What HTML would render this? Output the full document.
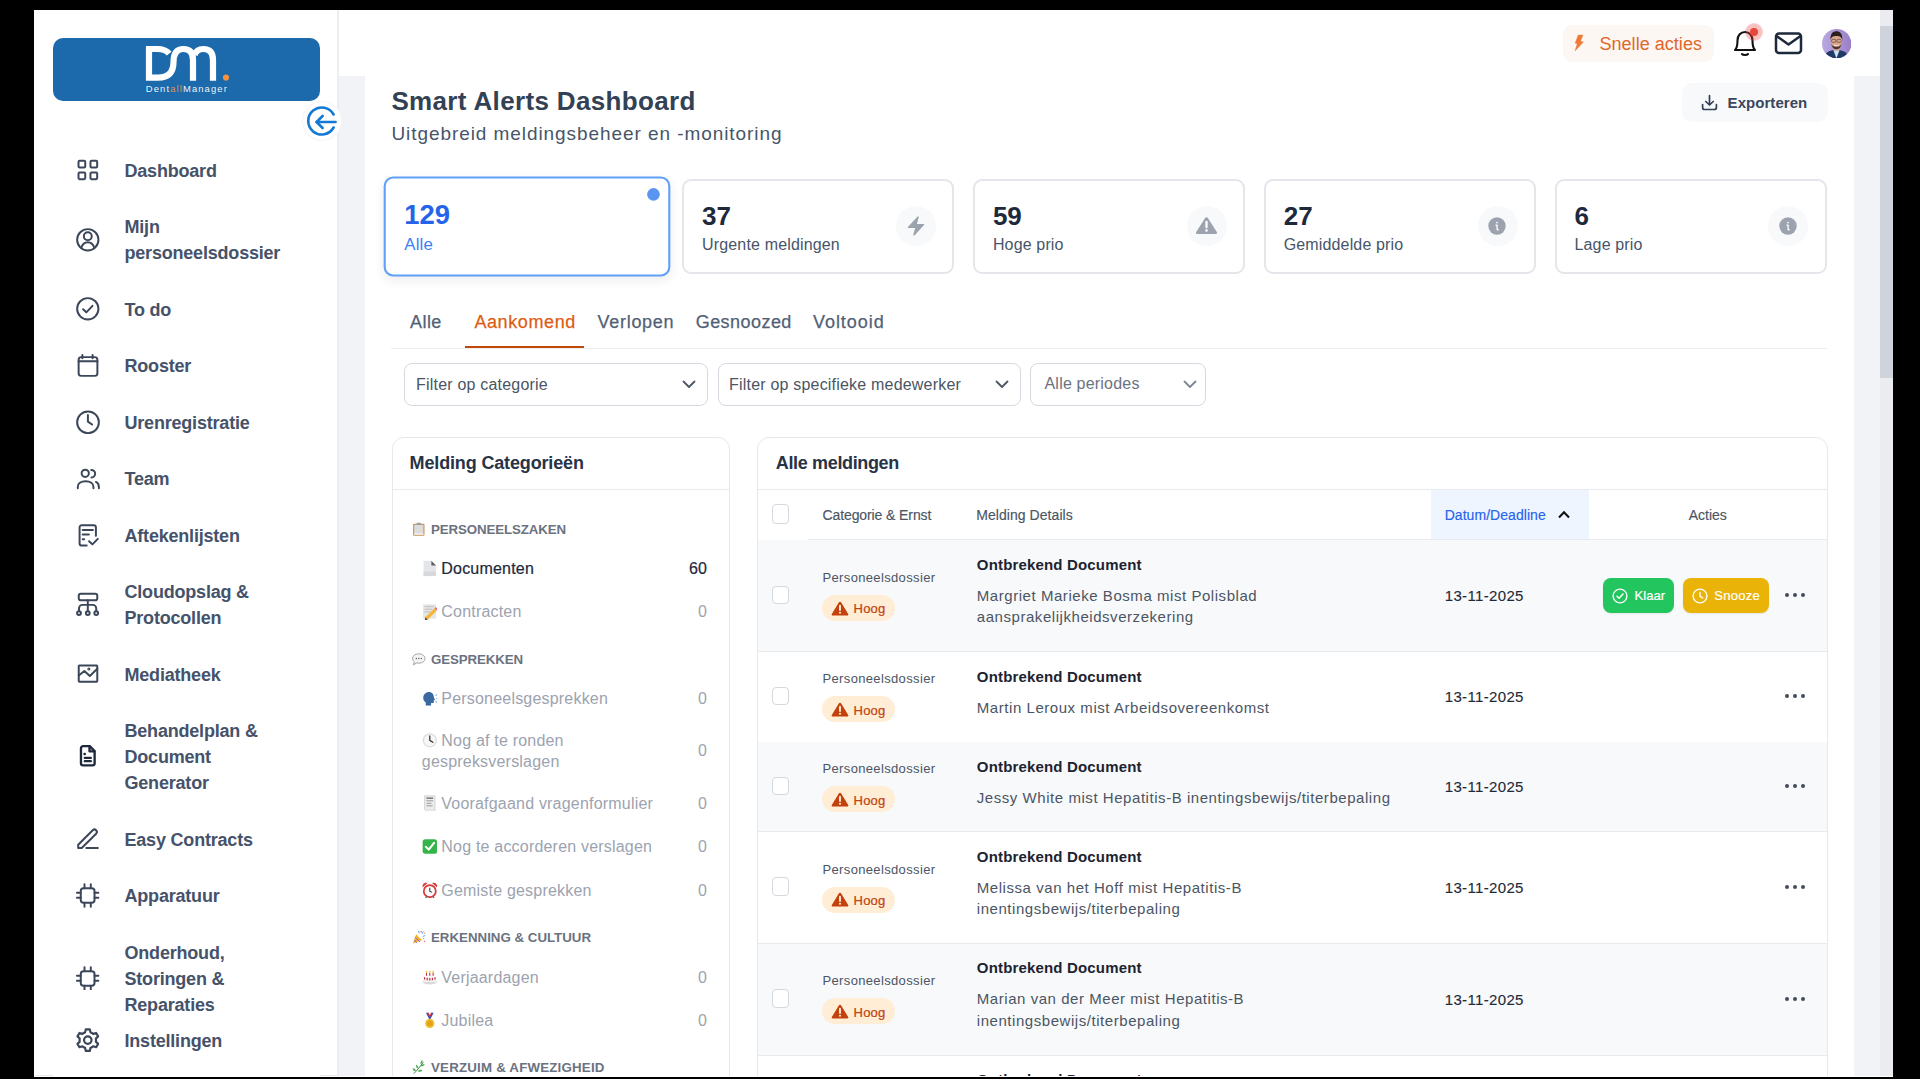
<!DOCTYPE html>
<html><head><meta charset="utf-8"><title>Smart Alerts Dashboard</title>
<style>
html,body{margin:0;padding:0;}
body{width:1920px;height:1079px;background:#000;position:relative;overflow:hidden;font-family:"Liberation Sans",sans-serif;}
.t{position:absolute;white-space:nowrap;}
.r{position:absolute;}
</style></head><body>

<div class="r" style="left:34px;top:10px;width:1859px;height:1067px;background:#fff;"></div>
<div class="r" style="left:338px;top:76px;width:1542px;height:1001px;background:#f2f3f7;"></div>
<div class="r" style="left:364.5px;top:76px;width:1489.5px;height:1001px;background:#fff;"></div>
<div class="r" style="left:1880px;top:10px;width:13px;height:1067px;background:#ebecf0;"></div>
<div class="r" style="left:1880px;top:25.5px;width:13px;height:352.5px;background:#cfd3db;"></div>
<div class="r" style="left:337px;top:10px;width:1.6px;height:1067px;background:#eceef2;"></div>
<div class="r" style="left:53px;top:38px;width:266.5px;height:62.5px;background:#1c6aab;border-radius:10px;"></div>
<svg class="r" style="left:53px;top:38px;" width="266" height="62.5" viewBox="53 38 266 62.5" fill="none">
<g stroke="#fff" stroke-width="6.2" fill="none" stroke-linejoin="miter">
<path d="M169.2,53.6 Q165.5,49 157,49 L149,49 L149,77.6 L158,77.6 Q173.5,77.6 173.5,62 Q173.5,49 183.5,49 Q193,49 193,60 L193,80.8"/>
<path d="M194.5,55 Q196.5,49 203.5,49 Q213,49 213,60 L213,80.8"/>
</g>
<circle cx="226" cy="77.5" r="3.1" fill="#f5913f"/>
<text x="145.8" y="92.2" font-family="Liberation Sans" font-size="9.4" fill="#fff" fill-opacity="0.95" textLength="81" lengthAdjust="spacing">Dent<tspan fill="#f5913f">all</tspan>Manager</text>
</svg>
<div class="r" style="left:303px;top:102px;width:38px;height:38px;background:#fff;border-radius:50%;box-shadow:0 0 0 1px #f4f5f7;"></div>
<svg class="r" style="left:306px;top:105.5px;" width="32" height="32" viewBox="0 0 32 32" fill="none">
<g stroke="#1479d4" stroke-width="2.6" stroke-linecap="round" stroke-linejoin="round" fill="none">
<path d="M27.6,8.5 A13.5,13.5 0 1 0 27.6,21.5"/>
<path d="M10.6,16 H29.6"/>
<path d="M16.6,10 L10.6,16 L16.6,22"/>
</g></svg>
<div class="t" style="left:124.5px;top:161.96px;font-size:18px;line-height:18px;color:#45526a;font-weight:700;letter-spacing:-0.2px;">Dashboard</div>
<svg class="r" style="left:74.7px;top:157.2px;" width="25.6" height="25.6" viewBox="0 0 24 24" fill="none"><g stroke="#3b4658" stroke-width="1.85" stroke-linecap="round" stroke-linejoin="round"><rect x="3.3" y="3.6" width="6.3" height="6.3" rx="1"/><rect x="14.5" y="3.6" width="6.3" height="6.3" rx="1"/><rect x="3.3" y="14.5" width="6.3" height="6.3" rx="1"/><rect x="14.5" y="14.5" width="6.3" height="6.3" rx="1"/></g></svg>
<div class="t" style="left:124.5px;top:218.26px;font-size:18px;line-height:18px;color:#45526a;font-weight:700;letter-spacing:-0.2px;">Mijn</div>
<div class="t" style="left:124.5px;top:244.26px;font-size:18px;line-height:18px;color:#45526a;font-weight:700;letter-spacing:-0.2px;">personeelsdossier</div>
<svg class="r" style="left:74.7px;top:226.5px;" width="25.6" height="25.6" viewBox="0 0 24 24" fill="none"><g stroke="#3b4658" stroke-width="1.85" stroke-linecap="round" stroke-linejoin="round"><circle cx="12" cy="12" r="10"/><circle cx="12" cy="8.6" r="3.7"/><path d="M5.9,19.4 C7,16 9.3,14.3 12,14.3 C14.7,14.3 17,16 18.1,19.4"/></g></svg>
<div class="t" style="left:124.5px;top:300.76px;font-size:18px;line-height:18px;color:#45526a;font-weight:700;letter-spacing:-0.2px;">To do</div>
<svg class="r" style="left:74.7px;top:296.0px;" width="25.6" height="25.6" viewBox="0 0 24 24" fill="none"><g stroke="#3b4658" stroke-width="1.85" stroke-linecap="round" stroke-linejoin="round"><circle cx="12" cy="12" r="10"/><path d="M7.6,12.4 L10.6,15.3 L16.4,9.2"/></g></svg>
<div class="t" style="left:124.5px;top:357.06px;font-size:18px;line-height:18px;color:#45526a;font-weight:700;letter-spacing:-0.2px;">Rooster</div>
<svg class="r" style="left:74.7px;top:352.3px;" width="25.6" height="25.6" viewBox="0 0 24 24" fill="none"><g stroke="#3b4658" stroke-width="1.85" stroke-linecap="round" stroke-linejoin="round"><rect x="3.4" y="4.8" width="17.6" height="17.6" rx="2.4"/><path d="M3.4,8.6 H21 M6.9,2.8 V5.8 M16.5,2.8 V5.8"/></g></svg>
<div class="t" style="left:124.5px;top:413.66px;font-size:18px;line-height:18px;color:#45526a;font-weight:700;letter-spacing:-0.2px;">Urenregistratie</div>
<svg class="r" style="left:74.7px;top:408.9px;" width="25.6" height="25.6" viewBox="0 0 24 24" fill="none"><g stroke="#3b4658" stroke-width="1.85" stroke-linecap="round" stroke-linejoin="round"><circle cx="12.2" cy="12.5" r="10.2"/><path d="M12.1,5.6 V11.8 L16,14.6"/></g></svg>
<div class="t" style="left:124.5px;top:470.06px;font-size:18px;line-height:18px;color:#45526a;font-weight:700;letter-spacing:-0.2px;">Team</div>
<svg class="r" style="left:74.7px;top:465.3px;" width="25.6" height="25.6" viewBox="0 0 24 24" fill="none"><g stroke="#3b4658" stroke-width="1.85" stroke-linecap="round" stroke-linejoin="round"><circle cx="9.6" cy="7.8" r="3.4"/><path d="M2.6,21.8 V20.6 C2.6,17.5 5.5,15.3 9.95,15.3 C14.4,15.3 17.3,17.5 17.3,20.6 V21.8"/><path d="M15.2,4.6 A3.6,3.6 0 0 1 15.4,11.8"/><path d="M19.6,15.9 C21.3,16.7 22.4,18.4 22.4,20.6 V21.8"/></g></svg>
<div class="t" style="left:124.5px;top:526.56px;font-size:18px;line-height:18px;color:#45526a;font-weight:700;letter-spacing:-0.2px;">Aftekenlijsten</div>
<svg class="r" style="left:74.7px;top:521.8000000000001px;" width="25.6" height="25.6" viewBox="0 0 24 24" fill="none"><g stroke="#3b4658" stroke-width="1.85" stroke-linecap="round" stroke-linejoin="round"><path d="M19.6,13 V5 A2,2 0 0 0 17.6,3 H6.3 A2,2 0 0 0 4.3,5 V20.1 A2,2 0 0 0 6.3,22.1 H11"/><path d="M7.2,7.4 H16.8 M7.2,11.8 H13 M7.2,16.1 H8.6"/><path d="M13.2,18 L16.3,21 L21.4,15.8"/></g></svg>
<div class="t" style="left:124.5px;top:582.86px;font-size:18px;line-height:18px;color:#45526a;font-weight:700;letter-spacing:-0.2px;">Cloudopslag &amp;</div>
<div class="t" style="left:124.5px;top:608.86px;font-size:18px;line-height:18px;color:#45526a;font-weight:700;letter-spacing:-0.2px;">Protocollen</div>
<svg class="r" style="left:74.7px;top:591.1px;" width="25.6" height="25.6" viewBox="0 0 24 24" fill="none"><g stroke="#3b4658" stroke-width="1.85" stroke-linecap="round" stroke-linejoin="round"><rect x="3.5" y="2.6" width="17.4" height="6.1" rx="2"/><path d="M12,8.7 V18.9 M12,13 H7 A3.25,3.25 0 0 0 3.75,16.25 V18.9 M12,13 H16.65 A3.25,3.25 0 0 1 19.9,16.25 V18.9"/><circle cx="3.75" cy="20.7" r="1.8"/><circle cx="12" cy="20.7" r="1.8"/><circle cx="19.9" cy="20.7" r="1.8"/></g></svg>
<div class="t" style="left:124.5px;top:665.66px;font-size:18px;line-height:18px;color:#45526a;font-weight:700;letter-spacing:-0.2px;">Mediatheek</div>
<svg class="r" style="left:74.7px;top:660.9000000000001px;" width="25.6" height="25.6" viewBox="0 0 24 24" fill="none"><g stroke="#3b4658" stroke-width="1.85" stroke-linecap="round" stroke-linejoin="round"><rect x="3.5" y="4.3" width="17.4" height="15.1" rx="0.6"/><path d="M3.5,13.6 L8.8,9.3 L13.9,14 L20.9,7.2"/><circle cx="13" cy="7.6" r="0.5"/></g></svg>
<div class="t" style="left:124.5px;top:721.96px;font-size:18px;line-height:18px;color:#45526a;font-weight:700;letter-spacing:-0.2px;">Behandelplan &amp;</div>
<div class="t" style="left:124.5px;top:747.96px;font-size:18px;line-height:18px;color:#45526a;font-weight:700;letter-spacing:-0.2px;">Document</div>
<div class="t" style="left:124.5px;top:773.96px;font-size:18px;line-height:18px;color:#45526a;font-weight:700;letter-spacing:-0.2px;">Generator</div>
<svg class="r" style="left:74.7px;top:743.2px;" width="25.6" height="25.6" viewBox="0 0 24 24" fill="none"><g stroke="#1e293b" stroke-width="2.2" stroke-linecap="round" stroke-linejoin="round"><path d="M13.8,3 H7.6 A2,2 0 0 0 5.6,5 V19 A2,2 0 0 0 7.6,21 H16.4 A2,2 0 0 0 18.4,19 V7.6 Z"/><path d="M13.6,3.2 V7.8 H18.2"/><path d="M9.2,13.9 H14.8 M9.2,17 H14.8"/><path d="M8.9,10.3 h0.3"/></g></svg>
<div class="t" style="left:124.5px;top:830.76px;font-size:18px;line-height:18px;color:#45526a;font-weight:700;letter-spacing:-0.2px;">Easy Contracts</div>
<svg class="r" style="left:74.7px;top:826.0px;" width="25.6" height="25.6" viewBox="0 0 24 24" fill="none"><g stroke="#3b4658" stroke-width="1.85" stroke-linecap="round" stroke-linejoin="round"><path d="M3,20.6 V17.6 L16.6,4 A2.2,2.2 0 0 1 19.8,7.2 L6.3,20.6 Z"/><path d="M10.6,20.6 H21.4"/></g></svg>
<div class="t" style="left:124.5px;top:887.16px;font-size:18px;line-height:18px;color:#45526a;font-weight:700;letter-spacing:-0.2px;">Apparatuur</div>
<svg class="r" style="left:74.7px;top:882.4000000000001px;" width="25.6" height="25.6" viewBox="0 0 24 24" fill="none"><g stroke="#3b4658" stroke-width="1.85" stroke-linecap="round" stroke-linejoin="round"><rect x="5.4" y="5.8" width="12.9" height="13.6" rx="2.6"/><path d="M8.9,2 V5.8 M14.8,2 V5.8 M8.9,19.4 V23.2 M14.8,19.4 V23.2 M1.8,10 H5.4 M1.8,14.7 H5.4 M18.3,10 H21.9 M18.3,14.7 H21.9"/></g></svg>
<div class="t" style="left:124.5px;top:943.56px;font-size:18px;line-height:18px;color:#45526a;font-weight:700;letter-spacing:-0.2px;">Onderhoud,</div>
<div class="t" style="left:124.5px;top:969.56px;font-size:18px;line-height:18px;color:#45526a;font-weight:700;letter-spacing:-0.2px;">Storingen &amp;</div>
<div class="t" style="left:124.5px;top:995.56px;font-size:18px;line-height:18px;color:#45526a;font-weight:700;letter-spacing:-0.2px;">Reparaties</div>
<svg class="r" style="left:74.7px;top:964.8000000000001px;" width="25.6" height="25.6" viewBox="0 0 24 24" fill="none"><g stroke="#3b4658" stroke-width="1.85" stroke-linecap="round" stroke-linejoin="round"><rect x="5.4" y="5.8" width="12.9" height="13.6" rx="2.6"/><path d="M8.9,2 V5.8 M14.8,2 V5.8 M8.9,19.4 V23.2 M14.8,19.4 V23.2 M1.8,10 H5.4 M1.8,14.7 H5.4 M18.3,10 H21.9 M18.3,14.7 H21.9"/></g></svg>
<div class="t" style="left:124.5px;top:1031.86px;font-size:18px;line-height:18px;color:#45526a;font-weight:700;letter-spacing:-0.2px;">Instellingen</div>
<svg class="r" style="left:74.7px;top:1027.1000000000001px;" width="25.6" height="25.6" viewBox="0 0 24 24" fill="none"><g stroke="#3b4658" stroke-width="1.85" stroke-linecap="round" stroke-linejoin="round"><g transform="translate(12 12.3) scale(1.1) translate(-12 -12)"><path d="M10.3,2.8 H13.7 L14.3,5.4 A7.2,7.2 0 0 1 16.6,6.7 L19.1,5.9 L20.8,8.8 L18.9,10.7 A7.2,7.2 0 0 1 18.9,13.3 L20.8,15.2 L19.1,18.1 L16.6,17.3 A7.2,7.2 0 0 1 14.3,18.6 L13.7,21.2 H10.3 L9.7,18.6 A7.2,7.2 0 0 1 7.4,17.3 L4.9,18.1 L3.2,15.2 L5.1,13.3 A7.2,7.2 0 0 1 5.1,10.7 L3.2,8.8 L4.9,5.9 L7.4,6.7 A7.2,7.2 0 0 1 9.7,5.4 Z"/><circle cx="12" cy="12" r="3.2"/></g></g></svg>
<div class="r" style="left:1563px;top:25px;width:151px;height:37px;background:#fdf7f3;border-radius:9px;"></div>
<svg class="r" style="left:1570px;top:30px;" width="18" height="25" viewBox="1570 30 18 25" fill="none"><path d="M1578.2,35.1 L1582.9,35.1 L1580.6,41.3 L1583.4,41.9 L1575.1,50.9 L1577.2,43.6 L1575.1,43.2 Z" fill="#ee7a35" stroke="#ee7a35" stroke-width="0.4" stroke-linejoin="round"/></svg>
<div class="t" style="left:1599.5px;top:34.76px;font-size:18px;line-height:18px;color:#e0672a;font-weight:400;letter-spacing:0.03px;">Snelle acties</div>
<svg class="r" style="left:1731px;top:28px;" width="28" height="30" viewBox="0 0 28 30" fill="none"><g stroke="#111" stroke-width="2.1" fill="none" stroke-linecap="round" stroke-linejoin="round">
<path d="M4,22 C6,20 6.5,18 6.5,12.5 C6.5,7.2 9.8,4 14,4 C18.2,4 21.5,7.2 21.5,12.5 C21.5,18 22,20 24,22 Z"/>
<path d="M11,26 C12,27.3 16,27.3 17,26"/></g></svg>
<div class="r" style="left:1745px;top:22.7px;width:18px;height:18px;background:radial-gradient(circle, rgba(239,68,68,0.38) 0%, rgba(239,68,68,0.32) 60%, rgba(239,68,68,0) 100%);border-radius:50%;"></div>
<div class="r" style="left:1750px;top:27.7px;width:8px;height:8px;background:#e8473a;border-radius:50%;"></div>
<svg class="r" style="left:1773px;top:30px;" width="31" height="26" viewBox="0 0 31 26" fill="none"><g stroke="#1e293b" stroke-width="2.5" fill="none" stroke-linejoin="round" stroke-linecap="round">
<rect x="3" y="3.5" width="25" height="19.5" rx="3"/><path d="M3.5,6 L15.5,14.5 L27.5,6"/></g></svg>
<svg class="r" style="left:1821.5px;top:28.8px;" width="29.4" height="29.4" viewBox="0 0 30 30" fill="none"><defs><clipPath id="av"><circle cx="15" cy="15" r="15"/></clipPath>
<linearGradient id="avbg" x1="0" y1="0" x2="1" y2="0"><stop offset="0" stop-color="#b9a8e0"/><stop offset="1" stop-color="#9a80c8"/></linearGradient></defs>
<g clip-path="url(#av)"><rect width="30" height="30" fill="url(#avbg)"/>
<path d="M2,31 C3,24 7,21.5 14.6,21.5 C22,21.5 26.5,24 27.5,31 Z" fill="#1f3a66"/>
<path d="M11.5,21.2 L14.7,30 L18,21.2 Z" fill="#cfe0f2"/>
<rect x="12.4" y="17" width="4.6" height="5" fill="#c99178"/>
<ellipse cx="14.7" cy="12" rx="5.9" ry="8" fill="#d9a68c"/>
<path d="M8.7,11.5 C8.2,4.5 11.2,2.2 14.7,2.2 C18.2,2.2 21.2,4.5 20.7,11.5 C20.2,8.6 18.6,7.2 14.7,7.2 C10.8,7.2 9.2,8.6 8.7,11.5 Z" fill="#2b201c"/>
<path d="M9.5,14.5 C10,19.5 12.5,20.5 14.7,20.5 C16.9,20.5 19.4,19.5 19.9,14.5 C19,17.8 17,18 14.7,18 C12.4,18 10.4,17.8 9.5,14.5 Z" fill="#4a342a"/>
<rect x="9.8" y="10.6" width="4.3" height="3" rx="0.9" fill="none" stroke="#5a473d" stroke-width="0.7"/>
<rect x="15.3" y="10.6" width="4.3" height="3" rx="0.9" fill="none" stroke="#5a473d" stroke-width="0.7"/>
<path d="M12.3,16.2 C13.5,17.2 15.9,17.2 17.1,16.2" stroke="#fff" stroke-width="0.8" fill="none"/>
</g></svg>
<div class="t" style="left:391.4px;top:87.59px;font-size:26px;line-height:26px;color:#334155;font-weight:700;letter-spacing:0.35px;">Smart Alerts Dashboard</div>
<div class="t" style="left:391.4px;top:123.62px;font-size:19px;line-height:19px;color:#475569;font-weight:400;letter-spacing:0.93px;">Uitgebreid meldingsbeheer en -monitoring</div>
<div class="r" style="left:1681.5px;top:83px;width:146.5px;height:39px;background:#f8f9fb;border-radius:10px;"></div>
<svg class="r" style="left:1700px;top:93px;" width="19" height="19" viewBox="0 0 19 19" fill="none"><g stroke="#334155" stroke-width="1.7" fill="none" stroke-linecap="round" stroke-linejoin="round">
<path d="M9.5,2.5 V12 M5.8,8.5 L9.5,12 L13.2,8.5"/><path d="M2.6,11.5 V14.5 A2,2 0 0 0 4.6,16.5 H14.4 A2,2 0 0 0 16.4,14.5 V11.5"/></g></svg>
<div class="t" style="left:1727.6px;top:95.00px;font-size:15px;line-height:15px;color:#3a475c;font-weight:700;letter-spacing:0.05px;">Exporteren</div>
<div class="r" style="left:391.3px;top:179px;width:272px;height:94.6px;box-sizing:border-box;border:2px solid #60a0f8;border-radius:9px;background:#fff;transform:scale(1.054);box-shadow:0 4px 10px rgba(0,0,0,0.07);"><div class="r" style="left:247.5px;top:8.5px;width:12px;height:12px;border-radius:50%;background:#5b95f2;"></div><div class="t" style="left:17.6px;top:21.39px;font-size:26px;line-height:26px;font-weight:700;color:#2563eb;">129</div><div class="t" style="left:17.6px;top:55.36px;font-size:16px;line-height:16px;color:#3b82f6;letter-spacing:0.15px;">Alle</div></div>
<div class="r" style="left:682.1px;top:179.3px;width:272.3px;height:94.3px;box-sizing:border-box;border:2px solid #e4e6eb;border-radius:9px;background:#fff;"></div>
<div class="t" style="left:702.1px;top:202.59px;font-size:26px;line-height:26px;color:#1e293b;font-weight:700;">37</div>
<div class="t" style="left:702.1px;top:236.66px;font-size:16px;line-height:16px;color:#475569;font-weight:400;letter-spacing:0.15px;">Urgente meldingen</div>
<div class="r" style="left:895.9000000000001px;top:206.3px;width:40px;height:40px;background:#f8f9fb;border-radius:50%;"></div>
<svg class="r" style="left:904.5000000000001px;top:215.10000000000002px;" width="22" height="22" viewBox="0 0 24 24" fill="none"><path d="M14.615,1.595a.75.75 0 0 1 .359.852L12.982,9.75h7.268a.75.75 0 0 1 .548,1.262l-10.5,11.25a.75.75 0 0 1-1.272-.71l1.992-7.302H3.75a.75.75 0 0 1-.548-1.262l10.5-11.25a.75.75 0 0 1 .913-.143z" fill="#9ca3af"/></svg>
<div class="r" style="left:972.9000000000001px;top:179.3px;width:272.3px;height:94.3px;box-sizing:border-box;border:2px solid #e4e6eb;border-radius:9px;background:#fff;"></div>
<div class="t" style="left:992.9000000000001px;top:202.59px;font-size:26px;line-height:26px;color:#1e293b;font-weight:700;">59</div>
<div class="t" style="left:992.9000000000001px;top:236.66px;font-size:16px;line-height:16px;color:#475569;font-weight:400;letter-spacing:0.15px;">Hoge prio</div>
<div class="r" style="left:1186.7px;top:206.3px;width:40px;height:40px;background:#f8f9fb;border-radius:50%;"></div>
<svg class="r" style="left:1195.2px;top:216.3px;" width="23" height="19" viewBox="0 0 23 19" fill="none"><path d="M11.5,1.2 C12.2,1.2 12.6,1.6 13,2.2 L21.8,16 C22.4,17 21.8,18 20.7,18 H2.3 C1.2,18 0.6,17 1.2,16 L10,2.2 C10.4,1.6 10.8,1.2 11.5,1.2 Z" fill="#9ca3af"/><path d="M11.5,5.8 V11.3" stroke="#fff" stroke-width="2.3" stroke-linecap="round"/><circle cx="11.5" cy="14.6" r="1.25" fill="#fff"/></svg>
<div class="r" style="left:1263.7px;top:179.3px;width:272.3px;height:94.3px;box-sizing:border-box;border:2px solid #e4e6eb;border-radius:9px;background:#fff;"></div>
<div class="t" style="left:1283.7px;top:202.59px;font-size:26px;line-height:26px;color:#1e293b;font-weight:700;">27</div>
<div class="t" style="left:1283.7px;top:236.66px;font-size:16px;line-height:16px;color:#475569;font-weight:400;letter-spacing:0.15px;">Gemiddelde prio</div>
<div class="r" style="left:1477.5px;top:206.3px;width:40px;height:40px;background:#f8f9fb;border-radius:50%;"></div>
<svg class="r" style="left:1488.2px;top:217.20000000000002px;" width="18" height="18" viewBox="0 0 18 18" fill="none"><circle cx="9" cy="9" r="8.7" fill="#9ca3af"/><path d="M8,8.2 H9.1 V12.2 C9.1,12.9 9.6,13 10.2,12.7" stroke="#fff" stroke-width="1.3" fill="none" stroke-linecap="round" stroke-linejoin="round"/><circle cx="9" cy="5.6" r="0.85" fill="#fff"/></svg>
<div class="r" style="left:1554.5px;top:179.3px;width:272.3px;height:94.3px;box-sizing:border-box;border:2px solid #e4e6eb;border-radius:9px;background:#fff;"></div>
<div class="t" style="left:1574.5px;top:202.59px;font-size:26px;line-height:26px;color:#1e293b;font-weight:700;">6</div>
<div class="t" style="left:1574.5px;top:236.66px;font-size:16px;line-height:16px;color:#475569;font-weight:400;letter-spacing:0.15px;">Lage prio</div>
<div class="r" style="left:1768.3px;top:206.3px;width:40px;height:40px;background:#f8f9fb;border-radius:50%;"></div>
<svg class="r" style="left:1779.0px;top:217.20000000000002px;" width="18" height="18" viewBox="0 0 18 18" fill="none"><circle cx="9" cy="9" r="8.7" fill="#9ca3af"/><path d="M8,8.2 H9.1 V12.2 C9.1,12.9 9.6,13 10.2,12.7" stroke="#fff" stroke-width="1.3" fill="none" stroke-linecap="round" stroke-linejoin="round"/><circle cx="9" cy="5.6" r="0.85" fill="#fff"/></svg>
<div class="t" style="left:410px;top:313.16px;font-size:18px;line-height:18px;color:#526075;font-weight:400;letter-spacing:0.45px;-webkit-text-stroke:0.25px #526075;">Alle</div>
<div class="t" style="left:474.4px;top:313.16px;font-size:18px;line-height:18px;color:#de5d14;font-weight:400;letter-spacing:0.6px;-webkit-text-stroke:0.25px #de5d14;">Aankomend</div>
<div class="t" style="left:597.6px;top:313.16px;font-size:18px;line-height:18px;color:#526075;font-weight:400;letter-spacing:0.7px;-webkit-text-stroke:0.25px #526075;">Verlopen</div>
<div class="t" style="left:695.7px;top:313.16px;font-size:18px;line-height:18px;color:#526075;font-weight:400;letter-spacing:0.45px;-webkit-text-stroke:0.25px #526075;">Gesnoozed</div>
<div class="t" style="left:813px;top:313.16px;font-size:18px;line-height:18px;color:#526075;font-weight:400;letter-spacing:0.95px;-webkit-text-stroke:0.25px #526075;">Voltooid</div>
<div class="r" style="left:391px;top:348px;width:1436px;height:1px;background:#eceef2;"></div>
<div class="r" style="left:465px;top:346px;width:119px;height:2.2px;background:#bf4a0c;"></div>
<div class="r" style="left:404px;top:362.5px;width:303.5px;height:43px;box-sizing:border-box;border:1px solid #d5d9e0;border-radius:8px;background:#fff;"></div>
<div class="t" style="left:416px;top:377.06px;font-size:16px;line-height:16px;color:#4b5563;font-weight:400;letter-spacing:0.2px;">Filter op categorie</div>
<svg class="r" style="left:681.5px;top:378.5px;" width="14" height="10" viewBox="0 0 14 10" fill="none"><path d="M1.5,2.5 L7,8 L12.5,2.5" stroke="#4b5563" stroke-width="1.8" fill="none" stroke-linecap="round" stroke-linejoin="round"/></svg>
<div class="r" style="left:717.5px;top:362.5px;width:303px;height:43px;box-sizing:border-box;border:1px solid #d5d9e0;border-radius:8px;background:#fff;"></div>
<div class="t" style="left:729px;top:377.06px;font-size:16px;line-height:16px;color:#4b5563;font-weight:400;letter-spacing:0.2px;">Filter op specifieke medewerker</div>
<svg class="r" style="left:994.5px;top:378.5px;" width="14" height="10" viewBox="0 0 14 10" fill="none"><path d="M1.5,2.5 L7,8 L12.5,2.5" stroke="#4b5563" stroke-width="1.8" fill="none" stroke-linecap="round" stroke-linejoin="round"/></svg>
<div class="r" style="left:1030.3px;top:362.5px;width:175.5px;height:43px;box-sizing:border-box;border:1px solid #d5d9e0;border-radius:8px;background:#fff;"></div>
<div class="t" style="left:1044.5px;top:376.06px;font-size:16px;line-height:16px;color:#6b7280;font-weight:400;letter-spacing:0.2px;">Alle periodes</div>
<svg class="r" style="left:1183.1px;top:378.5px;" width="14" height="10" viewBox="0 0 14 10" fill="none"><path d="M1.5,2.5 L7,8 L12.5,2.5" stroke="#7d8696" stroke-width="1.8" fill="none" stroke-linecap="round" stroke-linejoin="round"/></svg>
<div class="r" style="left:391.5px;top:436.5px;width:338px;height:700px;box-sizing:border-box;border:1px solid #e6e8ec;border-radius:12px;background:#fff;"></div>
<div class="t" style="left:409.6px;top:454.06px;font-size:18px;line-height:18px;color:#283347;font-weight:700;letter-spacing:-0.15px;">Melding Categorie&euml;n</div>
<div class="r" style="left:392.5px;top:489px;width:336px;height:1px;background:#e8eaee;"></div>
<svg class="r" style="left:412.3px;top:521.6999999999999px;" width="13.6" height="14.506666666666666" viewBox="0 0 15 16" fill="none"><rect x="1.2" y="1.8" width="12.6" height="13.4" rx="1.2" fill="#c8924f"/><rect x="2.4" y="3.2" width="10.2" height="10.8" fill="#dcdcdc"/><rect x="2.4" y="12.6" width="10.2" height="1.4" fill="#f4f4f4"/><rect x="5" y="0.8" width="5" height="2.6" rx="0.8" fill="#9aa0a8"/></svg>
<div class="t" style="left:431px;top:522.54px;font-size:13.3px;line-height:13.3px;color:#6b7280;font-weight:700;letter-spacing:-0.12px;">PERSONEELSZAKEN</div>
<svg class="r" style="left:412.3px;top:652.0px;" width="13.6" height="14.506666666666666" viewBox="0 0 15 16" fill="none"><path d="M7.5,2 C11.8,2 14.3,4.4 14.3,7.2 C14.3,10 11.8,12.3 7.5,12.3 C6.7,12.3 5.9,12.2 5.2,12 L1.6,14.2 L2.6,10.8 C1.4,9.9 0.7,8.6 0.7,7.2 C0.7,4.4 3.2,2 7.5,2 Z" fill="#f4f4f4" stroke="#8f8f8f" stroke-width="0.9"/><circle cx="4.8" cy="7.2" r="0.75" fill="#555"/><circle cx="7.5" cy="7.2" r="0.75" fill="#555"/><circle cx="10.2" cy="7.2" r="0.75" fill="#555"/></svg>
<div class="t" style="left:431px;top:652.84px;font-size:13.3px;line-height:13.3px;color:#6b7280;font-weight:700;letter-spacing:-0.12px;">GESPREKKEN</div>
<svg class="r" style="left:412.3px;top:929.9px;" width="13.6" height="14.506666666666666" viewBox="0 0 15 16" fill="none"><path d="M1,15 L4.6,4.8 L11.2,11.4 Z" fill="#f3b52f"/><path d="M2.3,11.4 L5.6,14.1 M3.4,8.2 L8.6,13" stroke="#9b59b6" stroke-width="1.1"/><path d="M7,1 L8.2,3.6 M12.5,1.5 L11.3,4.2 M14.5,6 L11.8,7.2 M13.5,10 L12,9" stroke="#3a8ee6" stroke-width="0.9"/><circle cx="10" cy="2" r="0.8" fill="#e2457a"/><circle cx="14" cy="3.5" r="0.7" fill="#f08a2a"/><circle cx="13.8" cy="12.5" r="0.7" fill="#e2457a"/></svg>
<div class="t" style="left:431px;top:930.74px;font-size:13.3px;line-height:13.3px;color:#6b7280;font-weight:700;">ERKENNING &amp; CULTUUR</div>
<svg class="r" style="left:412.3px;top:1059.9px;" width="13.6" height="14.506666666666666" viewBox="0 0 15 16" fill="none"><path d="M2,15 C5,12 8,8.5 12.5,2.5" stroke="#2f7d32" stroke-width="1" fill="none"/><path d="M4.2,12.6 C2,12.6 0.6,11 0.8,9.2 C2.8,9.2 4.4,10.6 4.2,12.6 Z M6.8,9.6 C4.8,9 4,7 4.5,5.3 C6.4,6 7.3,7.8 6.8,9.6 Z M6.2,12.4 C7.6,10.6 10,10.4 11.5,11.2 C10.4,13 8,13.4 6.2,12.4 Z M9.2,6.6 C10.2,4.8 12.5,4.3 14,5 C13.2,6.8 11,7.4 9.2,6.6 Z M9.6,4.8 C9,3 9.8,1 11.4,0.4 C12.2,2.2 11.4,4 9.6,4.8 Z" fill="#4caf50"/></svg>
<div class="t" style="left:431px;top:1060.74px;font-size:13.3px;line-height:13.3px;color:#6b7280;font-weight:700;letter-spacing:0.2px;">VERZUIM &amp; AFWEZIGHEID</div>
<svg class="r" style="left:421.6px;top:560.0px;" width="15.6" height="16.64" viewBox="0 0 15 16" fill="none"><path d="M1.5,0.8 H9 L13.5,5.3 V15.5 H1.5 Z" fill="#e4e5e8"/><path d="M9,0.8 L13.5,5.3 H9 Z" fill="#5a5d63"/><path d="M1.5,11 H13.5 V15.5 H1.5 Z" fill="#d7d8dc"/></svg>
<div class="t" style="left:441.3px;top:561.06px;font-size:16px;line-height:16px;color:#1e293b;font-weight:400;letter-spacing:0.2px;-webkit-text-stroke:0.2px #1e293b;">Documenten</div>
<div class="t" style="left:646.8px;width:60px;text-align:right;top:561.06px;font-size:16px;line-height:16px;color:#1e293b;font-weight:400;-webkit-text-stroke:0.2px #1e293b;">60</div>
<svg class="r" style="left:421.6px;top:603.3px;" width="15.6" height="16.64" viewBox="0 0 15 16" fill="none"><rect x="1" y="1.2" width="12.5" height="14" fill="#e6e6e6"/><path d="M2.5,3.5 H11.5 M2.5,6 H10 M2.5,8.5 H8" stroke="#b0b0b0" stroke-width="0.7"/><path d="M3.2,13.8 L12,5 L14.2,7.2 L5.4,16 L2.8,16.3 Z" fill="#f4b63a"/><path d="M12,5 L13.2,3.8 L15.4,6 L14.2,7.2 Z" fill="#e46f86"/><path d="M2.8,16.3 L3.2,13.8 L5.4,16 Z" fill="#444"/></svg>
<div class="t" style="left:441.3px;top:604.36px;font-size:16px;line-height:16px;color:#9ca3af;font-weight:400;letter-spacing:0.2px;">Contracten</div>
<div class="t" style="left:646.8px;width:60px;text-align:right;top:604.36px;font-size:16px;line-height:16px;color:#9ca3af;font-weight:400;">0</div>
<svg class="r" style="left:421.6px;top:690.0px;" width="15.6" height="16.64" viewBox="0 0 15 16" fill="none"><path d="M1.2,8 C1.2,4.2 3.8,2 6.8,2 C9.7,2 11.4,4.2 11.4,7 L12.6,9.8 H11.3 V12.5 H8.7 V15 H3.6 V12 C2.2,11 1.2,9.7 1.2,8 Z" fill="#3a68a0"/><path d="M13,5.5 L14.6,4.3 M13.3,8.2 H15.2 M13,10.8 L14.6,12" stroke="#89b2e0" stroke-width="1"/></svg>
<div class="t" style="left:441.3px;top:691.06px;font-size:16px;line-height:16px;color:#9ca3af;font-weight:400;letter-spacing:0.2px;">Personeelsgesprekken</div>
<div class="t" style="left:646.8px;width:60px;text-align:right;top:691.06px;font-size:16px;line-height:16px;color:#9ca3af;font-weight:400;">0</div>
<svg class="r" style="left:421.6px;top:731.8px;" width="15.6" height="16.64" viewBox="0 0 15 16" fill="none"><circle cx="7.5" cy="8" r="6.8" fill="#dcdde0"/><circle cx="7.5" cy="8" r="5.6" fill="#f7f7f7"/><path d="M7.5,3.8 V8 L10.4,9.9" stroke="#333" stroke-width="1.2" fill="none" stroke-linecap="round"/></svg>
<div class="t" style="left:441.3px;top:732.86px;font-size:16px;line-height:16px;color:#9ca3af;font-weight:400;letter-spacing:0.2px;">Nog af te ronden</div>
<div class="t" style="left:421.8px;top:753.56px;font-size:16px;line-height:16px;color:#9ca3af;font-weight:400;letter-spacing:0.2px;">gespreksverslagen</div>
<div class="t" style="left:646.8px;width:60px;text-align:right;top:742.86px;font-size:16px;line-height:16px;color:#9ca3af;font-weight:400;">0</div>
<svg class="r" style="left:421.6px;top:794.9px;" width="15.6" height="16.64" viewBox="0 0 15 16" fill="none"><path d="M2.5,0.8 H12.5 V15.2 L11,14.2 L9.5,15.2 L8,14.2 L6.5,15.2 L5,14.2 L3.5,15.2 L2.5,14.2 Z" fill="#ececec" stroke="#c4c4c4" stroke-width="0.6"/><path d="M4.3,3 H10.7" stroke="#555" stroke-width="1.1"/><path d="M4.3,5.6 H10.7 M4.3,8 H9 M4.3,10.4 H10.2" stroke="#8a8a8a" stroke-width="0.8"/></svg>
<div class="t" style="left:441.3px;top:795.96px;font-size:16px;line-height:16px;color:#9ca3af;font-weight:400;letter-spacing:0.2px;">Voorafgaand vragenformulier</div>
<div class="t" style="left:646.8px;width:60px;text-align:right;top:795.96px;font-size:16px;line-height:16px;color:#9ca3af;font-weight:400;">0</div>
<svg class="r" style="left:421.6px;top:838.0px;" width="15.6" height="16.64" viewBox="0 0 15 16" fill="none"><rect x="0.6" y="1.2" width="14" height="14" rx="2.6" fill="#35b44a"/><path d="M3.7,8.4 L6.5,11.2 L11.6,4.6" stroke="#fff" stroke-width="2" fill="none" stroke-linecap="round" stroke-linejoin="round"/></svg>
<div class="t" style="left:441.3px;top:839.06px;font-size:16px;line-height:16px;color:#9ca3af;font-weight:400;letter-spacing:0.2px;">Nog te accorderen verslagen</div>
<div class="t" style="left:646.8px;width:60px;text-align:right;top:839.06px;font-size:16px;line-height:16px;color:#9ca3af;font-weight:400;">0</div>
<svg class="r" style="left:421.6px;top:881.6px;" width="15.6" height="16.64" viewBox="0 0 15 16" fill="none"><circle cx="7.5" cy="8.8" r="5.8" fill="#fafafa" stroke="#d8393a" stroke-width="1.7"/><path d="M1,4.2 C1,2.2 2.6,1 4.2,1.3 Z M14,4.2 C14,2.2 12.4,1 10.8,1.3 Z" fill="#d8393a" stroke="#d8393a" stroke-width="1"/><path d="M7.5,5.5 V8.8 L9.6,10" stroke="#333" stroke-width="1" fill="none"/><path d="M3.4,15.4 L4.6,13.6 M11.6,15.4 L10.4,13.6" stroke="#555" stroke-width="1"/></svg>
<div class="t" style="left:441.3px;top:882.66px;font-size:16px;line-height:16px;color:#9ca3af;font-weight:400;letter-spacing:0.2px;">Gemiste gesprekken</div>
<div class="t" style="left:646.8px;width:60px;text-align:right;top:882.66px;font-size:16px;line-height:16px;color:#9ca3af;font-weight:400;">0</div>
<svg class="r" style="left:421.6px;top:968.5px;" width="15.6" height="16.64" viewBox="0 0 15 16" fill="none"><ellipse cx="7.5" cy="12.3" rx="6.8" ry="2.6" fill="#d9d9dc"/><rect x="1.5" y="7" width="12" height="5.6" fill="#f2f2f2"/><ellipse cx="7.5" cy="7.2" rx="6" ry="1.8" fill="#fbfbfb"/><path d="M2.5,8 V10 M5,8.5 V10.8 M7.5,8.7 V11 M10,8.5 V10.8 M12.5,8 V10" stroke="#c0283a" stroke-width="1.1"/><path d="M4.3,3.5 V6.5 M7.5,3.5 V6.5 M10.7,3.5 V6.5" stroke="#c0283a" stroke-width="1"/><circle cx="4.3" cy="2.6" r="0.9" fill="#f5c542"/><circle cx="7.5" cy="2.6" r="0.9" fill="#f5c542"/><circle cx="10.7" cy="2.6" r="0.9" fill="#f5c542"/></svg>
<div class="t" style="left:441.3px;top:969.56px;font-size:16px;line-height:16px;color:#9ca3af;font-weight:400;letter-spacing:0.2px;">Verjaardagen</div>
<div class="t" style="left:646.8px;width:60px;text-align:right;top:969.56px;font-size:16px;line-height:16px;color:#9ca3af;font-weight:400;">0</div>
<svg class="r" style="left:421.6px;top:1012.1999999999999px;" width="15.6" height="16.64" viewBox="0 0 15 16" fill="none"><path d="M3.8,0.8 L7.5,8 L11.2,0.8 H9 L7.5,4 L6,0.8 Z" fill="#2d4fb0"/><path d="M5.2,0.8 L7.5,5.5 L9.8,0.8 H8.6 L7.5,3 L6.4,0.8 Z" fill="#e23b3b"/><circle cx="7.5" cy="11" r="4.4" fill="#f2be2c"/><circle cx="7.5" cy="11" r="2.8" fill="#e2a51a"/></svg>
<div class="t" style="left:441.3px;top:1013.26px;font-size:16px;line-height:16px;color:#9ca3af;font-weight:400;letter-spacing:0.2px;">Jubilea</div>
<div class="t" style="left:646.8px;width:60px;text-align:right;top:1013.26px;font-size:16px;line-height:16px;color:#9ca3af;font-weight:400;">0</div>
<div class="r" style="left:757px;top:436.5px;width:1070.5px;height:700px;box-sizing:border-box;border:1px solid #e6e8ec;border-radius:12px;background:#fff;overflow:hidden;"></div>
<div class="t" style="left:775.8px;top:453.96px;font-size:18px;line-height:18px;color:#283347;font-weight:700;letter-spacing:-0.35px;">Alle meldingen</div>
<div class="r" style="left:758px;top:489px;width:1068.5px;height:1px;background:#e8eaee;"></div>
<div class="r" style="left:1430.5px;top:490px;width:158.5px;height:49.3px;background:#eef5ff;"></div>
<div class="r" style="left:772px;top:504.4px;width:17px;height:19.3px;box-sizing:border-box;border:1.3px solid #d3d8df;border-radius:4px;background:#fff;"></div>
<div class="t" style="left:822.5px;top:507.75px;font-size:14px;line-height:14px;color:#4b5563;font-weight:400;letter-spacing:-0.1px;-webkit-text-stroke:0.15px #4b5563;">Categorie &amp; Ernst</div>
<div class="t" style="left:976.3px;top:507.75px;font-size:14px;line-height:14px;color:#4b5563;font-weight:400;letter-spacing:0.05px;-webkit-text-stroke:0.15px #4b5563;">Melding Details</div>
<div class="t" style="left:1444.7px;top:507.75px;font-size:14px;line-height:14px;color:#2563eb;font-weight:400;letter-spacing:0.05px;-webkit-text-stroke:0.15px #2563eb;">Datum/Deadline</div>
<svg class="r" style="left:1556.5px;top:509px;" width="14" height="10" viewBox="0 0 14 10" fill="none"><path d="M2,8.5 L7,3.3 L12,8.5" stroke="#111" stroke-width="2" fill="none"/></svg>
<div class="t" style="left:1657.8px;width:100px;text-align:center;top:507.75px;font-size:14px;line-height:14px;color:#4b5563;font-weight:400;-webkit-text-stroke:0.15px #4b5563;">Acties</div>
<div class="r" style="left:808px;top:539.3px;width:1018.5px;height:1px;background:#e8eaee;"></div>
<div class="r" style="left:758px;top:540.3px;width:1068.5px;height:111px;background:#f8f9fb;"></div>
<div class="r" style="left:758px;top:651.3px;width:1068.5px;height:1px;background:#e8eaee;"></div>
<div class="r" style="left:772px;top:585.5px;width:17px;height:18.8px;box-sizing:border-box;border:1.3px solid #d3d8df;border-radius:4px;background:#fff;"></div>
<div class="t" style="left:822.5px;top:570.80px;font-size:13px;line-height:13px;color:#4b5563;font-weight:400;letter-spacing:0.35px;">Personeelsdossier</div>
<div class="r" style="left:822.1px;top:594.8px;width:72.7px;height:26px;background:#ffedd5;border-radius:13px;"></div>
<svg class="r" style="left:830.5px;top:600.5999999999999px;" width="18" height="15" viewBox="0 0 18 15" fill="none"><path d="M9,0.8 C9.6,0.8 9.9,1.1 10.2,1.6 L17.2,13 C17.6,13.8 17.2,14.5 16.3,14.5 H1.7 C0.8,14.5 0.4,13.8 0.8,13 L7.8,1.6 C8.1,1.1 8.4,0.8 9,0.8 Z" fill="#c2410c"/><path d="M9,4.6 V9" stroke="#ffedd5" stroke-width="1.9" stroke-linecap="round"/><circle cx="9" cy="11.7" r="1.05" fill="#ffedd5"/></svg>
<div class="t" style="left:853.6px;top:602.40px;font-size:13px;line-height:13px;color:#c2410c;font-weight:400;letter-spacing:0.2px;-webkit-text-stroke:0.2px #c2410c;">Hoog</div>
<div class="t" style="left:976.8px;top:556.70px;font-size:15px;line-height:15px;color:#1d2330;font-weight:700;letter-spacing:0.17px;">Ontbrekend Document</div>
<div class="t" style="left:976.8px;top:587.50px;font-size:15px;line-height:15px;color:#4b5563;font-weight:400;letter-spacing:0.55px;">Margriet Marieke Bosma mist Polisblad</div>
<div class="t" style="left:976.8px;top:609.00px;font-size:15px;line-height:15px;color:#4b5563;font-weight:400;letter-spacing:0.55px;">aansprakelijkheidsverzekering</div>
<div class="t" style="left:1444.7px;top:588.00px;font-size:15px;line-height:15px;color:#1f2937;font-weight:400;letter-spacing:0.35px;-webkit-text-stroke:0.12px #1f2937;">13-11-2025</div>
<div class="r" style="left:1785.4px;top:593.1999999999999px;width:4.1px;height:4.1px;background:#434c5a;border-radius:50%;"></div>
<div class="r" style="left:1793.0px;top:593.1999999999999px;width:4.1px;height:4.1px;background:#434c5a;border-radius:50%;"></div>
<div class="r" style="left:1800.6000000000001px;top:593.1999999999999px;width:4.1px;height:4.1px;background:#434c5a;border-radius:50%;"></div>
<div class="r" style="left:1603px;top:578.3px;width:71px;height:34.4px;background:#22c55e;border-radius:8px;box-shadow:0 1px 2px rgba(0,0,0,0.08);"></div>
<svg class="r" style="left:1612.4px;top:588.3px;" width="16" height="16" viewBox="0 0 16 16" fill="none"><circle cx="8" cy="8" r="6.9" stroke="#fff" stroke-width="1.4" fill="none"/><path d="M5,8.2 L7.1,10.2 L11,6" stroke="#fff" stroke-width="1.5" fill="none" stroke-linecap="round" stroke-linejoin="round"/></svg>
<div class="t" style="left:1634.5px;top:588.90px;font-size:13px;line-height:13px;color:#fff;font-weight:400;letter-spacing:0.05px;-webkit-text-stroke:0.2px #fff;">Klaar</div>
<div class="r" style="left:1683.2px;top:578.3px;width:85.4px;height:34.4px;background:#eab308;border-radius:8px;box-shadow:0 1px 2px rgba(0,0,0,0.08);"></div>
<svg class="r" style="left:1692.4px;top:588.3px;" width="16" height="16" viewBox="0 0 16 16" fill="none"><circle cx="8" cy="8" r="6.9" stroke="#fff" stroke-width="1.4" fill="none"/><path d="M8,4.4 V8.3 L10.6,9.9" stroke="#fff" stroke-width="1.4" fill="none" stroke-linecap="round"/></svg>
<div class="t" style="left:1714.2px;top:588.90px;font-size:13px;line-height:13px;color:#fff;font-weight:400;letter-spacing:0.3px;-webkit-text-stroke:0.2px #fff;">Snooze</div>
<div class="r" style="left:758px;top:741.5px;width:1068.5px;height:1px;background:#e8eaee;"></div>
<div class="r" style="left:772px;top:686.7px;width:17px;height:18.8px;box-sizing:border-box;border:1.3px solid #d3d8df;border-radius:4px;background:#fff;"></div>
<div class="t" style="left:822.5px;top:672.00px;font-size:13px;line-height:13px;color:#4b5563;font-weight:400;letter-spacing:0.35px;">Personeelsdossier</div>
<div class="r" style="left:822.1px;top:696.0px;width:72.7px;height:26px;background:#ffedd5;border-radius:13px;"></div>
<svg class="r" style="left:830.5px;top:701.8px;" width="18" height="15" viewBox="0 0 18 15" fill="none"><path d="M9,0.8 C9.6,0.8 9.9,1.1 10.2,1.6 L17.2,13 C17.6,13.8 17.2,14.5 16.3,14.5 H1.7 C0.8,14.5 0.4,13.8 0.8,13 L7.8,1.6 C8.1,1.1 8.4,0.8 9,0.8 Z" fill="#c2410c"/><path d="M9,4.6 V9" stroke="#ffedd5" stroke-width="1.9" stroke-linecap="round"/><circle cx="9" cy="11.7" r="1.05" fill="#ffedd5"/></svg>
<div class="t" style="left:853.6px;top:703.60px;font-size:13px;line-height:13px;color:#c2410c;font-weight:400;letter-spacing:0.2px;-webkit-text-stroke:0.2px #c2410c;">Hoog</div>
<div class="t" style="left:976.8px;top:668.90px;font-size:15px;line-height:15px;color:#1d2330;font-weight:700;letter-spacing:0.17px;">Ontbrekend Document</div>
<div class="t" style="left:976.8px;top:699.70px;font-size:15px;line-height:15px;color:#4b5563;font-weight:400;letter-spacing:0.55px;">Martin Leroux mist Arbeidsovereenkomst</div>
<div class="t" style="left:1444.7px;top:689.20px;font-size:15px;line-height:15px;color:#1f2937;font-weight:400;letter-spacing:0.35px;-webkit-text-stroke:0.12px #1f2937;">13-11-2025</div>
<div class="r" style="left:1785.4px;top:694.4px;width:4.1px;height:4.1px;background:#434c5a;border-radius:50%;"></div>
<div class="r" style="left:1793.0px;top:694.4px;width:4.1px;height:4.1px;background:#434c5a;border-radius:50%;"></div>
<div class="r" style="left:1800.6000000000001px;top:694.4px;width:4.1px;height:4.1px;background:#434c5a;border-radius:50%;"></div>
<div class="r" style="left:758px;top:742.4px;width:1068.5px;height:89px;background:#f8f9fb;"></div>
<div class="r" style="left:758px;top:831.4px;width:1068.5px;height:1px;background:#e8eaee;"></div>
<div class="r" style="left:772px;top:776.6px;width:17px;height:18.8px;box-sizing:border-box;border:1.3px solid #d3d8df;border-radius:4px;background:#fff;"></div>
<div class="t" style="left:822.5px;top:761.90px;font-size:13px;line-height:13px;color:#4b5563;font-weight:400;letter-spacing:0.35px;">Personeelsdossier</div>
<div class="r" style="left:822.1px;top:785.9px;width:72.7px;height:26px;background:#ffedd5;border-radius:13px;"></div>
<svg class="r" style="left:830.5px;top:791.6999999999999px;" width="18" height="15" viewBox="0 0 18 15" fill="none"><path d="M9,0.8 C9.6,0.8 9.9,1.1 10.2,1.6 L17.2,13 C17.6,13.8 17.2,14.5 16.3,14.5 H1.7 C0.8,14.5 0.4,13.8 0.8,13 L7.8,1.6 C8.1,1.1 8.4,0.8 9,0.8 Z" fill="#c2410c"/><path d="M9,4.6 V9" stroke="#ffedd5" stroke-width="1.9" stroke-linecap="round"/><circle cx="9" cy="11.7" r="1.05" fill="#ffedd5"/></svg>
<div class="t" style="left:853.6px;top:793.50px;font-size:13px;line-height:13px;color:#c2410c;font-weight:400;letter-spacing:0.2px;-webkit-text-stroke:0.2px #c2410c;">Hoog</div>
<div class="t" style="left:976.8px;top:758.80px;font-size:15px;line-height:15px;color:#1d2330;font-weight:700;letter-spacing:0.17px;">Ontbrekend Document</div>
<div class="t" style="left:976.8px;top:789.60px;font-size:15px;line-height:15px;color:#4b5563;font-weight:400;letter-spacing:0.55px;">Jessy White mist Hepatitis-B inentingsbewijs/titerbepaling</div>
<div class="t" style="left:1444.7px;top:779.10px;font-size:15px;line-height:15px;color:#1f2937;font-weight:400;letter-spacing:0.35px;-webkit-text-stroke:0.12px #1f2937;">13-11-2025</div>
<div class="r" style="left:1785.4px;top:784.3px;width:4.1px;height:4.1px;background:#434c5a;border-radius:50%;"></div>
<div class="r" style="left:1793.0px;top:784.3px;width:4.1px;height:4.1px;background:#434c5a;border-radius:50%;"></div>
<div class="r" style="left:1800.6000000000001px;top:784.3px;width:4.1px;height:4.1px;background:#434c5a;border-radius:50%;"></div>
<div class="r" style="left:758px;top:942.8px;width:1068.5px;height:1px;background:#e8eaee;"></div>
<div class="r" style="left:772px;top:877.25px;width:17px;height:18.8px;box-sizing:border-box;border:1.3px solid #d3d8df;border-radius:4px;background:#fff;"></div>
<div class="t" style="left:822.5px;top:862.55px;font-size:13px;line-height:13px;color:#4b5563;font-weight:400;letter-spacing:0.35px;">Personeelsdossier</div>
<div class="r" style="left:822.1px;top:886.55px;width:72.7px;height:26px;background:#ffedd5;border-radius:13px;"></div>
<svg class="r" style="left:830.5px;top:892.3499999999999px;" width="18" height="15" viewBox="0 0 18 15" fill="none"><path d="M9,0.8 C9.6,0.8 9.9,1.1 10.2,1.6 L17.2,13 C17.6,13.8 17.2,14.5 16.3,14.5 H1.7 C0.8,14.5 0.4,13.8 0.8,13 L7.8,1.6 C8.1,1.1 8.4,0.8 9,0.8 Z" fill="#c2410c"/><path d="M9,4.6 V9" stroke="#ffedd5" stroke-width="1.9" stroke-linecap="round"/><circle cx="9" cy="11.7" r="1.05" fill="#ffedd5"/></svg>
<div class="t" style="left:853.6px;top:894.15px;font-size:13px;line-height:13px;color:#c2410c;font-weight:400;letter-spacing:0.2px;-webkit-text-stroke:0.2px #c2410c;">Hoog</div>
<div class="t" style="left:976.8px;top:848.70px;font-size:15px;line-height:15px;color:#1d2330;font-weight:700;letter-spacing:0.17px;">Ontbrekend Document</div>
<div class="t" style="left:976.8px;top:879.50px;font-size:15px;line-height:15px;color:#4b5563;font-weight:400;letter-spacing:0.55px;">Melissa van het Hoff mist Hepatitis-B</div>
<div class="t" style="left:976.8px;top:901.00px;font-size:15px;line-height:15px;color:#4b5563;font-weight:400;letter-spacing:0.55px;">inentingsbewijs/titerbepaling</div>
<div class="t" style="left:1444.7px;top:879.75px;font-size:15px;line-height:15px;color:#1f2937;font-weight:400;letter-spacing:0.35px;-webkit-text-stroke:0.12px #1f2937;">13-11-2025</div>
<div class="r" style="left:1785.4px;top:884.9499999999999px;width:4.1px;height:4.1px;background:#434c5a;border-radius:50%;"></div>
<div class="r" style="left:1793.0px;top:884.9499999999999px;width:4.1px;height:4.1px;background:#434c5a;border-radius:50%;"></div>
<div class="r" style="left:1800.6000000000001px;top:884.9499999999999px;width:4.1px;height:4.1px;background:#434c5a;border-radius:50%;"></div>
<div class="r" style="left:758px;top:943.8px;width:1068.5px;height:111.2px;background:#f8f9fb;"></div>
<div class="r" style="left:758px;top:1055.0px;width:1068.5px;height:1px;background:#e8eaee;"></div>
<div class="r" style="left:772px;top:989.1px;width:17px;height:18.8px;box-sizing:border-box;border:1.3px solid #d3d8df;border-radius:4px;background:#fff;"></div>
<div class="t" style="left:822.5px;top:974.40px;font-size:13px;line-height:13px;color:#4b5563;font-weight:400;letter-spacing:0.35px;">Personeelsdossier</div>
<div class="r" style="left:822.1px;top:998.4px;width:72.7px;height:26px;background:#ffedd5;border-radius:13px;"></div>
<svg class="r" style="left:830.5px;top:1004.1999999999999px;" width="18" height="15" viewBox="0 0 18 15" fill="none"><path d="M9,0.8 C9.6,0.8 9.9,1.1 10.2,1.6 L17.2,13 C17.6,13.8 17.2,14.5 16.3,14.5 H1.7 C0.8,14.5 0.4,13.8 0.8,13 L7.8,1.6 C8.1,1.1 8.4,0.8 9,0.8 Z" fill="#c2410c"/><path d="M9,4.6 V9" stroke="#ffedd5" stroke-width="1.9" stroke-linecap="round"/><circle cx="9" cy="11.7" r="1.05" fill="#ffedd5"/></svg>
<div class="t" style="left:853.6px;top:1006.00px;font-size:13px;line-height:13px;color:#c2410c;font-weight:400;letter-spacing:0.2px;-webkit-text-stroke:0.2px #c2410c;">Hoog</div>
<div class="t" style="left:976.8px;top:960.20px;font-size:15px;line-height:15px;color:#1d2330;font-weight:700;letter-spacing:0.17px;">Ontbrekend Document</div>
<div class="t" style="left:976.8px;top:991.00px;font-size:15px;line-height:15px;color:#4b5563;font-weight:400;letter-spacing:0.55px;">Marian van der Meer mist Hepatitis-B</div>
<div class="t" style="left:976.8px;top:1012.50px;font-size:15px;line-height:15px;color:#4b5563;font-weight:400;letter-spacing:0.55px;">inentingsbewijs/titerbepaling</div>
<div class="t" style="left:1444.7px;top:991.60px;font-size:15px;line-height:15px;color:#1f2937;font-weight:400;letter-spacing:0.35px;-webkit-text-stroke:0.12px #1f2937;">13-11-2025</div>
<div class="r" style="left:1785.4px;top:996.8px;width:4.1px;height:4.1px;background:#434c5a;border-radius:50%;"></div>
<div class="r" style="left:1793.0px;top:996.8px;width:4.1px;height:4.1px;background:#434c5a;border-radius:50%;"></div>
<div class="r" style="left:1800.6000000000001px;top:996.8px;width:4.1px;height:4.1px;background:#434c5a;border-radius:50%;"></div>
<div class="r" style="left:758px;top:1175px;width:1068.5px;height:1px;background:#e8eaee;"></div>
<div class="r" style="left:772px;top:1105.2px;width:17px;height:18.8px;box-sizing:border-box;border:1.3px solid #d3d8df;border-radius:4px;background:#fff;"></div>
<div class="t" style="left:822.5px;top:1090.50px;font-size:13px;line-height:13px;color:#4b5563;font-weight:400;letter-spacing:0.35px;">Personeelsdossier</div>
<div class="r" style="left:822.1px;top:1114.5px;width:72.7px;height:26px;background:#ffedd5;border-radius:13px;"></div>
<svg class="r" style="left:830.5px;top:1120.3px;" width="18" height="15" viewBox="0 0 18 15" fill="none"><path d="M9,0.8 C9.6,0.8 9.9,1.1 10.2,1.6 L17.2,13 C17.6,13.8 17.2,14.5 16.3,14.5 H1.7 C0.8,14.5 0.4,13.8 0.8,13 L7.8,1.6 C8.1,1.1 8.4,0.8 9,0.8 Z" fill="#c2410c"/><path d="M9,4.6 V9" stroke="#ffedd5" stroke-width="1.9" stroke-linecap="round"/><circle cx="9" cy="11.7" r="1.05" fill="#ffedd5"/></svg>
<div class="t" style="left:853.6px;top:1122.10px;font-size:13px;line-height:13px;color:#c2410c;font-weight:400;letter-spacing:0.2px;-webkit-text-stroke:0.2px #c2410c;">Hoog</div>
<div class="t" style="left:976.8px;top:1072.40px;font-size:15px;line-height:15px;color:#1d2330;font-weight:700;letter-spacing:0.17px;">Ontbrekend Document</div>
<div class="t" style="left:976.8px;top:1103.20px;font-size:15px;line-height:15px;color:#4b5563;font-weight:400;letter-spacing:0.55px;">Iemand mist document</div>
<div class="t" style="left:1444.7px;top:1107.70px;font-size:15px;line-height:15px;color:#1f2937;font-weight:400;letter-spacing:0.35px;-webkit-text-stroke:0.12px #1f2937;">13-11-2025</div>
<div class="r" style="left:1785.4px;top:1112.9px;width:4.1px;height:4.1px;background:#434c5a;border-radius:50%;"></div>
<div class="r" style="left:1793.0px;top:1112.9px;width:4.1px;height:4.1px;background:#434c5a;border-radius:50%;"></div>
<div class="r" style="left:1800.6000000000001px;top:1112.9px;width:4.1px;height:4.1px;background:#434c5a;border-radius:50%;"></div>
<div class="r" style="left:34px;top:1075.6px;width:1859px;height:1.6px;background:#fff;"></div>
<div class="r" style="left:35px;top:1075px;width:18px;height:1.2px;background:#e8e9ef;"></div>
<div class="r" style="left:320px;top:1075px;width:19px;height:1.2px;background:#e8e9ef;"></div>
<div class="r" style="left:0px;top:1077px;width:1920px;height:2px;background:#000;"></div>
</body></html>
